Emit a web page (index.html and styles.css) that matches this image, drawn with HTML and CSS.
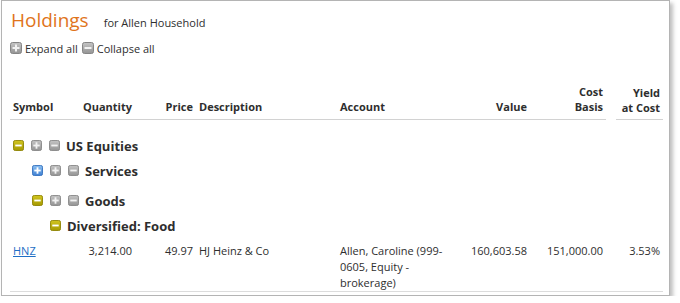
FILE: index.html
```html
<!DOCTYPE html>
<html lang="en">
<head>
    <meta charset="UTF-8">
    <title>Holdings</title>
    <link rel="stylesheet" href="styles.css">
</head>
<body>
    <!-- icon sprites -->
    <svg class="sprites" xmlns="http://www.w3.org/2000/svg">
        <defs>
            <linearGradient id="gOlive" x1="0" y1="0" x2="0" y2="1">
                <stop offset="0" stop-color="#d2c620"/>
                <stop offset="1" stop-color="#a59900"/>
            </linearGradient>
            <linearGradient id="gGrey" x1="0" y1="0" x2="0" y2="1">
                <stop offset="0" stop-color="#c4c4c4"/>
                <stop offset="1" stop-color="#949494"/>
            </linearGradient>
            <linearGradient id="gBlue" x1="0" y1="0" x2="0" y2="1">
                <stop offset="0" stop-color="#8cc0f2"/>
                <stop offset="1" stop-color="#3f80d2"/>
            </linearGradient>
            <symbol id="minusOlive" viewBox="0 0 12 12">
                <rect x="0.5" y="0.5" width="11" height="11" rx="2" fill="url(#gOlive)" stroke="#8d8200"/>
                <rect x="2.5" y="5" width="7" height="2" fill="#fff"/>
            </symbol>
            <symbol id="plusBlue" viewBox="0 0 12 12">
                <rect x="0.5" y="0.5" width="11" height="11" rx="2" fill="url(#gBlue)" stroke="#3270bd"/>
                <rect x="2.5" y="5" width="7" height="2" fill="#fff"/>
                <rect x="5" y="2.5" width="2" height="7" fill="#fff"/>
            </symbol>
            <symbol id="plusGrey" viewBox="0 0 12 12">
                <rect x="0.5" y="0.5" width="11" height="11" rx="2" fill="url(#gGrey)" stroke="#858585"/>
                <rect x="2.5" y="5" width="7" height="2" fill="#f2f2f2"/>
                <rect x="5" y="2.5" width="2" height="7" fill="#f2f2f2"/>
            </symbol>
            <symbol id="minusGrey" viewBox="0 0 12 12">
                <rect x="0.5" y="0.5" width="11" height="11" rx="2" fill="url(#gGrey)" stroke="#858585"/>
                <rect x="2.5" y="5" width="7" height="2" fill="#f2f2f2"/>
            </symbol>
        </defs>
    </svg>

    <div class="panel">
        <div class="title-row">
            <h1>Holdings</h1>
            <span class="subtitle">for Allen Household</span>
        </div>

        <div class="toggle-row">
            <svg class="ico"><use href="#plusGrey"/></svg>
            <span>Expand all</span>
            <svg class="ico"><use href="#minusGrey"/></svg>
            <span>Collapse all</span>
        </div>

        <table class="holdings">
            <colgroup>
                <col style="width:69px">
                <col style="width:56px">
                <col style="width:61px">
                <col style="width:141px">
                <col style="width:125px">
                <col style="width:68px">
                <col style="width:76px">
                <col style="width:57px">
            </colgroup>
            <thead>
                <tr>
                    <th class="left">Symbol</th>
                    <th>Quantity</th>
                    <th>Price</th>
                    <th class="left">Description</th>
                    <th class="left">Account</th>
                    <th>Value</th>
                    <th>Cost<br>Basis</th>
                    <th class="yield">Yield<br>at Cost</th>
                </tr>
            </thead>
            <tbody>
                <tr class="group lvl1">
                    <td colspan="8">
                        <div class="group-label">
                            <svg class="ico"><use href="#minusOlive"/></svg>
                            <svg class="ico"><use href="#plusGrey"/></svg>
                            <svg class="ico"><use href="#minusGrey"/></svg>
                            <span>US Equities</span>
                        </div>
                    </td>
                </tr>
                <tr class="group lvl2">
                    <td colspan="8">
                        <div class="group-label">
                            <svg class="ico"><use href="#plusBlue"/></svg>
                            <svg class="ico"><use href="#plusGrey"/></svg>
                            <svg class="ico"><use href="#minusGrey"/></svg>
                            <span>Services</span>
                        </div>
                    </td>
                </tr>
                <tr class="group lvl2 goods">
                    <td colspan="8">
                        <div class="group-label">
                            <svg class="ico"><use href="#minusOlive"/></svg>
                            <svg class="ico"><use href="#plusGrey"/></svg>
                            <svg class="ico"><use href="#minusGrey"/></svg>
                            <span>Goods</span>
                        </div>
                    </td>
                </tr>
                <tr class="group lvl3">
                    <td colspan="8">
                        <div class="group-label">
                            <svg class="ico"><use href="#minusOlive"/></svg>
                            <span>Diversified: Food</span>
                        </div>
                    </td>
                </tr>
                <tr class="data">
                    <td class="left"><a href="#">HNZ</a></td>
                    <td>3,214.00</td>
                    <td>49.97</td>
                    <td class="left">HJ Heinz &amp; Co</td>
                    <td class="left">Allen, Caroline (999-0605, Equity - brokerage)</td>
                    <td>160,603.58</td>
                    <td>151,000.00</td>
                    <td>3.53%</td>
                </tr>
            </tbody>
        </table>
    </div>
</body>
</html>
```

FILE: styles.css
```css
body {
    margin: 0;
    font-family: "Open Sans", Arial, sans-serif;
    font-size: 11px;
    color: #2e2e2e;
    background: #fff;
}

.sprites {
    position: absolute;
    width: 0;
    height: 0;
}

.panel {
    margin-left: 1px;
    width: 669px;
    height: 296px;
    border: 1px solid #b4b4b4;
    box-shadow: 3px 3px 4px rgba(0, 0, 0, 0.25);
    padding: 0 8px;
    box-sizing: border-box;
}

.title-row {
    display: flex;
    align-items: baseline;
    gap: 15px;
    padding: 7px 0 0 1px;
}

h1 {
    margin: 0;
    font-weight: normal;
    font-size: 19px;
    color: #e0741c;
    line-height: 24px;
}

.subtitle {
    font-size: 11px;
}

.toggle-row {
    display: flex;
    align-items: center;
    gap: 3px;
    margin-top: 8px;
    height: 16px;
}

.toggle-row .ico {
    width: 12px;
    height: 12px;
}

.toggle-row span + .ico {
    margin-left: 1px;
}

.ico {
    width: 11px;
    height: 11px;
    flex: none;
}

/* Table */
.holdings {
    margin-top: 28px;
    width: 653px;
    table-layout: fixed;
    border-collapse: collapse;
}

.holdings th {
    font-weight: bold;
    text-align: right;
    vertical-align: bottom;
    line-height: 15px;
    padding: 0 3px 5px;
    border-bottom: 1px solid #d2d2d2;
}

.holdings th.yield {
    border-bottom: none;
    background: linear-gradient(#d2d2d2, #d2d2d2) no-repeat right bottom / calc(100% - 10px) 1px;
}

.holdings td {
    text-align: right;
    vertical-align: top;
    padding: 0 3px;
    line-height: 16px;
}

.holdings .left {
    text-align: left;
}

.group td {
    padding: 0;
}

.group-label {
    display: flex;
    align-items: center;
    gap: 7px;
    font-weight: bold;
    font-size: 13px;
    height: 25px;
}

.group-label span {
    margin-left: -1px;
}

.lvl1 .group-label {
    padding-left: 3px;
    margin-top: 13px;
}

.lvl2 .group-label {
    padding-left: 22px;
}

.goods .group-label {
    margin-top: 5px;
}

.lvl3 .group-label {
    padding-left: 40px;
}

.data td {
    padding-top: 5px;
    padding-bottom: 0;
    border-bottom: 1px solid #dcdcdc;
}

.data a {
    color: #1f6fc5;
}
```
